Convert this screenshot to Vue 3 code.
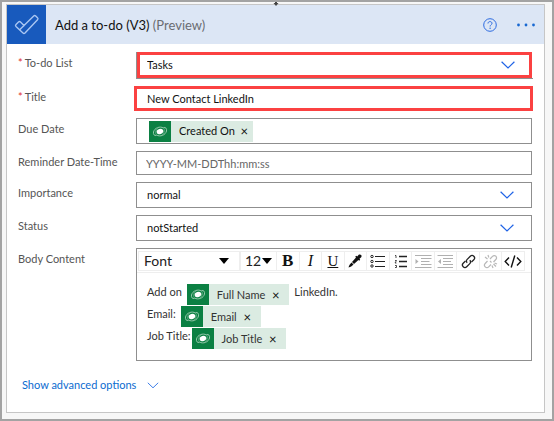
<script setup>
import { ref, h } from 'vue'

const list = ref('Tasks')
const title = ref('New Contact LinkedIn')
const reminder = ref('')
const importance = ref('normal')
const status = ref('notStarted')

const Chevron = () =>
  h('svg', { class: 'chevron', viewBox: '0 0 14 8', width: 14, height: 8, 'aria-hidden': 'true' }, [
    h('path', { d: 'M.6.8 7 7 13.4.8', fill: 'none', stroke: 'currentColor', 'stroke-width': 1.2 }),
  ])

const DataverseIcon = () =>
  h('svg', { viewBox: '0 0 22 21', width: 22, height: 21, 'aria-hidden': 'true' }, [
    h('rect', { width: 22, height: 21, fill: '#0b8043' }),
    h('g', { fill: 'none', stroke: '#94c8aa', 'stroke-width': 1 }, [
      h('path', { d: 'M14.5 7C11 4.800 5.500 6.800 4.500 11 4 13.500 5.500 15 7.500 14.500' }),
      h('path', { d: 'M7.500 14C11 16.200 16.500 14.200 17.500 10 18 7.500 16.500 6 14.500 6.500' }),
      h('path', { d: 'M14.500 7C16 8.500 15.500 12 13 14M7.500 14C6 12.500 6.500 9 9 7', stroke: '#5dab80' }),
    ]),
    h('ellipse', { cx: 11, cy: 10.5, rx: 3.4, ry: 2.6, fill: '#fff', transform: 'rotate(-20 11 10.5)' }),
  ])

const lines = [
  { before: 'Add on', token: 'Full Name', after: 'LinkedIn.' },
  { before: 'Email:', token: 'Email', after: '' },
  { before: 'Job Title:', token: 'Job Title', after: '', tight: true },
]
</script>

<template>
  <main class="frame">
    <svg class="connector" viewBox="0 0 6 4" width="6" height="4" aria-hidden="true"><path d="M2 0h2v1h1.500L3 4 .500 1H2z" fill="#444" /></svg>
    <section class="card">
      <header class="head">
        <span class="logo">
          <svg viewBox="0 0 39 39" width="39" height="39" aria-hidden="true">
            <g fill="none" stroke="#a9c6f2" stroke-width="1.400" stroke-linejoin="round">
              <path d="M9 19.500 11.500 17Q12.500 16 13.500 17L17 20.500 26.700 11Q27.700 10 28.700 11L30.500 12.800Q31.500 13.800 30.500 14.800L18 28Q17 29 16 28L9 21.500Q8 20.500 9 19.500z" />
              <path d="M17 20.500 12.700 24.800" />
            </g>
          </svg>
        </span>
        <h1>Add a to-do (V3) <small>(Preview)</small></h1>
        <button type="button" class="help" aria-label="Help">
          <svg viewBox="0 0 14 14" width="14" height="14" aria-hidden="true">
            <circle cx="7" cy="7" r="6.300" fill="none" stroke="#2d6be0" />
            <path d="M5 5.500C5 4.200 5.900 3.600 7 3.600S9 4.300 9 5.300C9 6.700 7.100 6.800 7.100 8.500" fill="none" stroke="#2d6be0" />
            <circle cx="7.100" cy="10.200" r=".7" fill="#2d6be0" />
          </svg>
        </button>
        <button type="button" class="more" aria-label="More">
          <svg viewBox="0 0 18 4" width="18" height="4" fill="#1768d2" aria-hidden="true">
            <circle cx="1.500" cy="2" r="1.400" /><circle cx="9" cy="2" r="1.400" /><circle cx="16.500" cy="2" r="1.400" />
          </svg>
        </button>
      </header>

      <form class="form" @submit.prevent>
        <label for="list"><i>*</i>To-do List</label>
        <div class="field marked-list">
          <select id="list" v-model="list"><option>Tasks</option></select>
          <Chevron />
        </div>

        <label for="title"><i>*</i>Title</label>
        <div class="field marked-title"><input id="title" v-model="title" type="text" /></div>

        <span class="label">Due Date</span>
        <div class="field due">
          <span class="chip"><DataverseIcon /><span class="name">Created On</span><button type="button" aria-label="Remove Created On">×</button></span>
        </div>

        <label for="reminder">Reminder Date-Time</label>
        <div class="field short"><input id="reminder" v-model="reminder" type="text" placeholder="YYYY-MM-DDThh:mm:ss" /></div>

        <label for="importance">Importance</label>
        <div class="field">
          <select id="importance" v-model="importance"><option>normal</option></select>
          <Chevron />
        </div>

        <label for="status">Status</label>
        <div class="field">
          <select id="status" v-model="status"><option>notStarted</option></select>
          <Chevron />
        </div>

        <span class="label">Body Content</span>
        <div class="editor">
          <div class="toolbar">
            <div class="pick font">
              <select aria-label="Font"><option>Font</option></select>
              <svg viewBox="0 0 10 6" width="10" height="6" aria-hidden="true"><path d="M0 0h10L5 6z" /></svg>
            </div>
            <div class="pick size">
              <select aria-label="Font size"><option>12</option></select>
              <svg viewBox="0 0 10 6" width="10" height="6" aria-hidden="true"><path d="M0 0h10L5 6z" /></svg>
            </div>
            <div class="tools">
              <button type="button" class="bold" aria-label="Bold">B</button>
              <button type="button" class="italic" aria-label="Italic">I</button>
              <button type="button" class="under" aria-label="Underline">U</button>
              <button type="button" aria-label="Color">
                <svg viewBox="0 0 16 16" width="16" height="16">
                  <path d="M1.500 14.500C2 12.500 3 11 4.500 9.500L6.500 11.500C5 13 3.500 14.200 1.500 14.500z" fill="#111" />
                  <path d="M5 9 9 4.500 8.200 3.700 9.300 2.800 10.200 3.500 11.700 1.800C13.500.500 15.500 2.500 14.200 4.300L12.500 5.800 13.200 6.700 12.200 7.700 11.400 7 7 11z" fill="#111" />
                </svg>
              </button>
              <button type="button" aria-label="Bulleted list">
                <svg viewBox="0 0 16 14" width="16" height="14" fill="none" stroke="#222">
                  <circle cx="2" cy="2.500" r="1.200" /><circle cx="2" cy="7.500" r="1.200" /><circle cx="2" cy="12" r="1.200" />
                  <path d="M5 2.500h10M5 7.500h10M5 12.500h10" />
                </svg>
              </button>
              <button type="button" aria-label="Numbered list">
                <svg viewBox="0 0 14 14" width="14" height="14" fill="none" stroke="#222">
                  <path d="M5 2.500h8M5 7.500h8M5 12.500h8" stroke-width="1.400" />
                  <path d="M1 1.500h1V4M1 6.500h1.500L1 9h1.500M1 11.500h1.500v2H1" stroke-width=".8" />
                </svg>
              </button>
              <button type="button" aria-label="Indent">
                <svg viewBox="0 0 17 13" width="17" height="13" fill="none" stroke="#b0b0b0">
                  <path d="M0 .5h16.500M6 3.500h10.500M6 6.500h8.500M6 9.500h10.500M0 12.500h16.500" /><path d="M.500 4 3.500 6.500.500 9z" fill="#b0b0b0" stroke="none" />
                </svg>
              </button>
              <button type="button" aria-label="Outdent">
                <svg viewBox="0 0 17 13" width="17" height="13" fill="none" stroke="#b0b0b0">
                  <path d="M.500 .5H16M6 3.500h10M6 6.500h8M6 9.500h10M.500 12.500H16" /><path d="M4 4 1 6.500 4 9z" fill="#b0b0b0" stroke="none" />
                </svg>
              </button>
              <button type="button" aria-label="Link">
                <svg viewBox="0 0 15 15" width="15" height="15" fill="none" stroke="#222" stroke-width="1.300">
                  <path d="M6.200 8.800C5 7.500 5.300 6.300 6.200 5.400L9.300 2.200C10.300 1.200 11.800 1.200 12.800 2.200S13.800 4.700 12.800 5.700L10.500 8" />
                  <path d="M8.800 6.200C10 7.500 9.700 8.700 8.800 9.600L5.700 12.800C4.700 13.800 3.200 13.800 2.200 12.800S1.200 10.300 2.200 9.300L4.500 7" />
                </svg>
              </button>
              <button type="button" aria-label="Unlink">
                <svg viewBox="0 0 15 15" width="15" height="15" fill="none" stroke="#b8b8b8" stroke-width="1.200">
                  <path d="M7 5 9.500 2.300C10.500 1.300 12 1.300 12.800 2.200S13.800 4.500 12.800 5.500L10.500 8" />
                  <path d="M8 10.500 5.700 12.800C4.700 13.800 3.200 13.800 2.200 12.800S1.200 10.500 2.200 9.500L4.500 7" />
                  <path d="M2 3 4.500 5M5 1 5.800 3.500M10.500 10 13 12.500M9 11.500 10 14M11.500 9 14 10M7 7 8.500 8.500" />
                </svg>
              </button>
              <button type="button" aria-label="Code view">
                <svg viewBox="0 0 18 13" width="18" height="13" fill="none" stroke="#111" stroke-width="1.400">
                  <path d="M5 2.500 1.200 6.500 5 10.500M13 2.500 16.800 6.500 13 10.500M10.800 .5 7.200 12.500" />
                </svg>
              </button>
            </div>
          </div>
          <div class="content" role="textbox" aria-label="Body Content">
            <p v-for="line in lines" :key="line.token" :class="{ tight: line.tight }">
              <span>{{ line.before }}</span>
              <span class="chip"><DataverseIcon /><span class="name">{{ line.token }}</span><button type="button" :aria-label="'Remove ' + line.token">×</button></span>
              <span v-if="line.after">{{ line.after }}</span>
            </p>
          </div>
        </div>
      </form>

      <a class="advanced" href="#advanced">Show advanced options <svg viewBox="0 0 12 7" width="12" height="7" aria-hidden="true"><path d="M.800.800 6 5.800 11.200.800" fill="none" stroke="#3f7fe8" /></svg></a>
    </section>
  </main>
</template>

<style>
body {
  margin: 0;
}
</style>

<style scoped>
* {
  box-sizing: border-box;
}
.frame {
  position: relative;
  min-height: 100vh;
  display: flex;
  padding: 2px 7px 6px 4px;
  border: 2px solid #a3a3a3;
  background: #f7f7f7;
  font: 11px/16px Lato, "Open Sans", sans-serif;
  color: #111;
}
.connector {
  position: absolute;
  top: 0;
  left: calc(50% - 4px);
}
.card {
  flex: 1;
  min-width: 0;
  border: 1px solid #c6c6c6;
  background: #fff;
}
.head {
  display: flex;
  align-items: center;
  height: 39px;
  padding-right: 9px;
  background: #dce6f5;
}
.logo {
  flex: none;
  width: 39px;
  height: 39px;
  background: #185abd;
}
.logo svg,
.help svg,
.more svg {
  display: block;
}
h1 {
  flex: 1;
  margin: 0 0 0 9px;
  font-size: 13px;
  font-weight: 400;
  color: #111;
}
h1 small {
  font-size: 13px;
  color: #6a6c72;
}
button,
select,
input {
  margin: 0;
  padding: 0;
  border: 0;
  background: none;
  font: inherit;
  color: inherit;
  outline: 0;
}
select {
  appearance: none;
}
.more {
  margin-left: 20px;
}
.form {
  display: grid;
  grid-template-columns: 118px minmax(0, 1fr);
  row-gap: 7px;
  padding: 8px 12px 0 11px;
}
label,
.label {
  padding-top: 3px;
  color: #555;
}
label i {
  margin-right: 2px;
  font-style: normal;
  color: #e03030;
}
.field {
  display: flex;
  align-items: center;
  height: 26px;
  border: 1px solid #8f8f8f;
}
.field select,
.field input {
  flex: 1;
  min-width: 0;
  height: 100%;
  padding-left: 10px;
}
.field select {
  padding-right: 31px;
}
.chevron {
  flex: none;
  margin: 0 17px 0 -31px;
  color: #1f63e6;
  pointer-events: none;
}
.field.short {
  height: 24px;
}
.field.short input {
  padding-left: 9px;
}
.short input::placeholder {
  color: #666;
  opacity: 1;
}
.marked-list {
  height: 27px;
  margin-right: -1px;
  border-width: 0 0 1px 1px;
}
.marked-list select {
  padding-left: 7px;
  border: 3px solid #fb4141;
}
.field.marked-list .chevron {
  margin-right: 18px;
}
.marked-title {
  height: 25px;
  margin: 0 -1px 0 -2px;
  border: 3px solid #fb4141;
}
.due {
  padding-left: 12px;
}
.chip {
  display: inline-flex;
  align-items: center;
  height: 21px;
  padding-right: 4px;
  background: #dbebe2;
}
.chip .name {
  margin: 0 5px 0 8px;
}
.chip button {
  width: 9px;
  line-height: 20px;
  font-size: 13px;
}
.editor {
  min-height: 113px;
  border: 1px solid #8f8f8f;
}
.toolbar {
  display: flex;
  height: 24px;
  padding: 2px 6px 1px 1px;
  border-bottom: 1px solid #eee;
}
.pick {
  display: flex;
  align-items: center;
  border: 1px solid #eee;
  font-size: 14px;
}
.pick select {
  flex: 1;
  min-width: 0;
  height: 20px;
  line-height: 20px;
  color: #222;
}
.pick svg {
  flex: none;
  pointer-events: none;
}
.font {
  width: 102px;
  padding: 0 10px 0 5px;
}
.size {
  width: 37px;
  padding: 0 4px;
}
.tools {
  flex: 1;
  display: flex;
}
.tools button {
  flex: 1;
  min-width: 0;
  display: flex;
  align-items: center;
  justify-content: center;
  border: 1px solid #eee;
  border-left: 0;
}
.tools svg {
  flex: none;
}
.bold,
.italic,
.under {
  font-family: "Liberation Serif", serif;
}
.tools .bold {
  font-size: 17px;
  font-weight: 700;
}
.tools .italic {
  font-size: 16px;
  font-style: italic;
}
.tools .under {
  font-size: 15px;
  text-decoration: underline;
}
.content {
  padding: 11px 10px 10px;
  color: #333;
}
.content p {
  display: flex;
  gap: 5px;
  height: 22px;
  margin: 0;
}
.content p.tight {
  gap: 1px;
}
.content .chip {
  padding-right: 9px;
}
.content .name {
  margin-right: 6px;
}
.content button {
  color: #111;
}
.advanced {
  display: inline-flex;
  align-items: center;
  gap: 11px;
  margin: 16px 0 0 15px;
  color: #0b6bd0;
  text-decoration: none;
}
</style>
